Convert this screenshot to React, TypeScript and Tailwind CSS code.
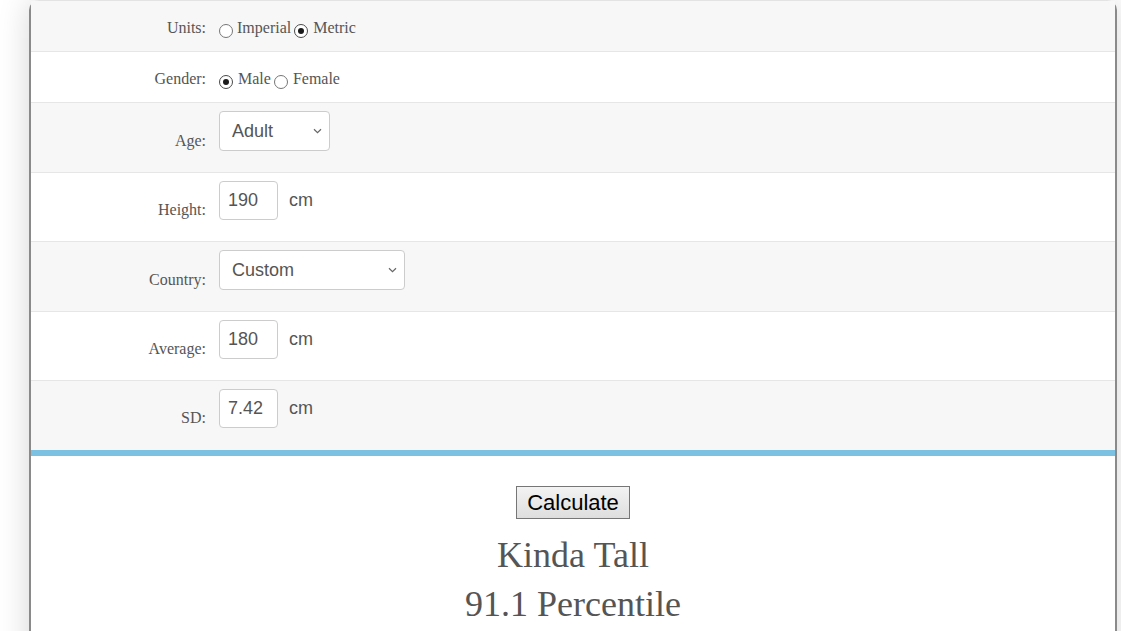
import { useState } from "react"

const serif = { fontFamily: '"Liberation Serif", "Times New Roman", serif' }
const sans = { fontFamily: '"Liberation Sans", Arial, sans-serif' }

const Radio = ({ checked, onClick }: { checked: boolean; onClick: () => void }) => (
  <span
    onClick={onClick}
    className={`mt-[6px] flex h-[14px] w-[14px] shrink-0 cursor-pointer items-center justify-center rounded-full border-[1.5px] bg-white ${
      checked ? "border-[#4a4a4a]" : "border-[#767676]"
    }`}
  >
    {checked && <span className="h-[6px] w-[6px] rounded-full bg-[#1a1a1a]" />}
  </span>
)

const Chevron = () => (
  <svg width="9" height="6" viewBox="0 0 9 6" className="pointer-events-none absolute right-[8px] top-1/2 -translate-y-1/2">
    <path d="M1 1.2 L4.5 4.6 L8 1.2" fill="none" stroke="#666" strokeWidth="1.2" />
  </svg>
)

const Label = ({ children }: { children: React.ReactNode }) => (
  <div className="w-[175px] shrink-0 text-right text-[16px] leading-5 text-[#555]" style={serif}>
    {children}
  </div>
)

const InputRow = ({
  label,
  value,
  onChange,
  gray,
  border = true,
  h,
}: {
  label: string
  value: string
  onChange: (v: string) => void
  gray?: boolean
  border?: boolean
  h: string
}) => (
  <div className={`flex items-start pt-2 ${h} ${gray ? "bg-[#f7f7f7]" : "bg-white"} ${border ? "border-b border-[#e6e6e6]" : ""}`}>
    <div className="flex items-end">
      <Label>{label}:</Label>
      <div className="ml-[13px] flex items-center">
        <input
          value={value}
          onChange={(e) => onChange(e.target.value)}
          className="h-[39px] w-[59px] rounded-[4px] border border-[#cccccc] bg-white px-2 text-[18px] text-[#555] outline-none"
          style={sans}
        />
        <span className="ml-[11px] text-[18px] text-[#555]" style={sans}>
          cm
        </span>
      </div>
    </div>
  </div>
)

const SelectRow = ({
  label,
  value,
  options,
  onChange,
  width,
  h,
  gray,
}: {
  label: string
  value: string
  options: string[]
  onChange: (v: string) => void
  width: string
  h: string
  gray?: boolean
}) => (
  <div className={`flex items-start border-b border-[#e6e6e6] pt-2 ${h} ${gray ? "bg-[#f7f7f7]" : "bg-white"}`}>
    <div className="flex items-end">
      <Label>{label}:</Label>
      <div className={`relative ml-[13px] ${width}`}>
        <select
          value={value}
          onChange={(e) => onChange(e.target.value)}
          className="h-[40px] w-full appearance-none rounded-[4px] border border-[#cccccc] bg-white pl-3 text-[18px] text-[#555] outline-none"
          style={sans}
        >
          {options.map((o) => (
            <option key={o}>{o}</option>
          ))}
        </select>
        <Chevron />
      </div>
    </div>
  </div>
)

export default function App() {
  const [units, setUnits] = useState("metric")
  const [gender, setGender] = useState("male")
  const [age, setAge] = useState("Adult")
  const [height, setHeight] = useState("190")
  const [country, setCountry] = useState("Custom")
  const [avg, setAvg] = useState("180")
  const [sd, setSd] = useState("7.42")

  return (
    <div className="min-h-screen overflow-hidden bg-white">
      <div className="ml-[29px] w-[1088px] rounded-t-[10px] border-x-2 border-t border-x-[#8a8a8a] border-t-[#e3e3e3] bg-white pb-24 shadow-[0_0_32px_rgba(0,0,0,0.16)]">
        {/* Units */}
        <div className="flex h-[51px] items-center border-b border-[#e6e6e6] bg-[#f7f7f7] pt-1">
          <Label>Units:</Label>
          <div className="ml-[13px] flex items-center text-[16px] leading-5 text-[#555]" style={serif}>
            <Radio checked={units === "imperial"} onClick={() => setUnits("imperial")} />
            <span className="ml-[4px]">Imperial</span>
            <span className="ml-[3px]">
              <Radio checked={units === "metric"} onClick={() => setUnits("metric")} />
            </span>
            <span className="ml-[5px]">Metric</span>
          </div>
        </div>

        {/* Gender */}
        <div className="flex h-[51px] items-center border-b border-[#e6e6e6] bg-white pt-1">
          <Label>Gender:</Label>
          <div className="ml-[13px] flex items-center text-[16px] leading-5 text-[#555]" style={serif}>
            <Radio checked={gender === "male"} onClick={() => setGender("male")} />
            <span className="ml-[5px]">Male</span>
            <span className="ml-[3px]">
              <Radio checked={gender === "female"} onClick={() => setGender("female")} />
            </span>
            <span className="ml-[5px]">Female</span>
          </div>
        </div>

        <SelectRow label="Age" value={age} options={["Adult", "Child"]} onChange={setAge} width="w-[111px]" h="h-[70px]" gray />
        <InputRow label="Height" value={height} onChange={setHeight} h="h-[69px]" />
        <SelectRow
          label="Country"
          value={country}
          options={["Custom", "United States", "United Kingdom"]}
          onChange={setCountry}
          width="w-[186px]"
          h="h-[70px]"
          gray
        />
        <InputRow label="Average" value={avg} onChange={setAvg} h="h-[69px]" />
        <InputRow label="SD" value={sd} onChange={setSd} h="h-[69px]" gray border={false} />

        <div className="h-[6px] bg-[#7dc1e2]" />

        <div className="flex flex-col items-center pt-[30px]">
          <button
            className="h-[33px] border border-[#767676] bg-gradient-to-b from-[#f3f3f3] to-[#dedede] px-[10px] text-[22px] leading-none text-black"
            style={sans}
          >
            Calculate
          </button>
          <div className="mt-[12px] text-center text-[36px] leading-[49px] text-[#555]" style={serif}>
            <div>Kinda Tall</div>
            <div>91.1 Percentile</div>
          </div>
        </div>
      </div>
    </div>
  )
}
